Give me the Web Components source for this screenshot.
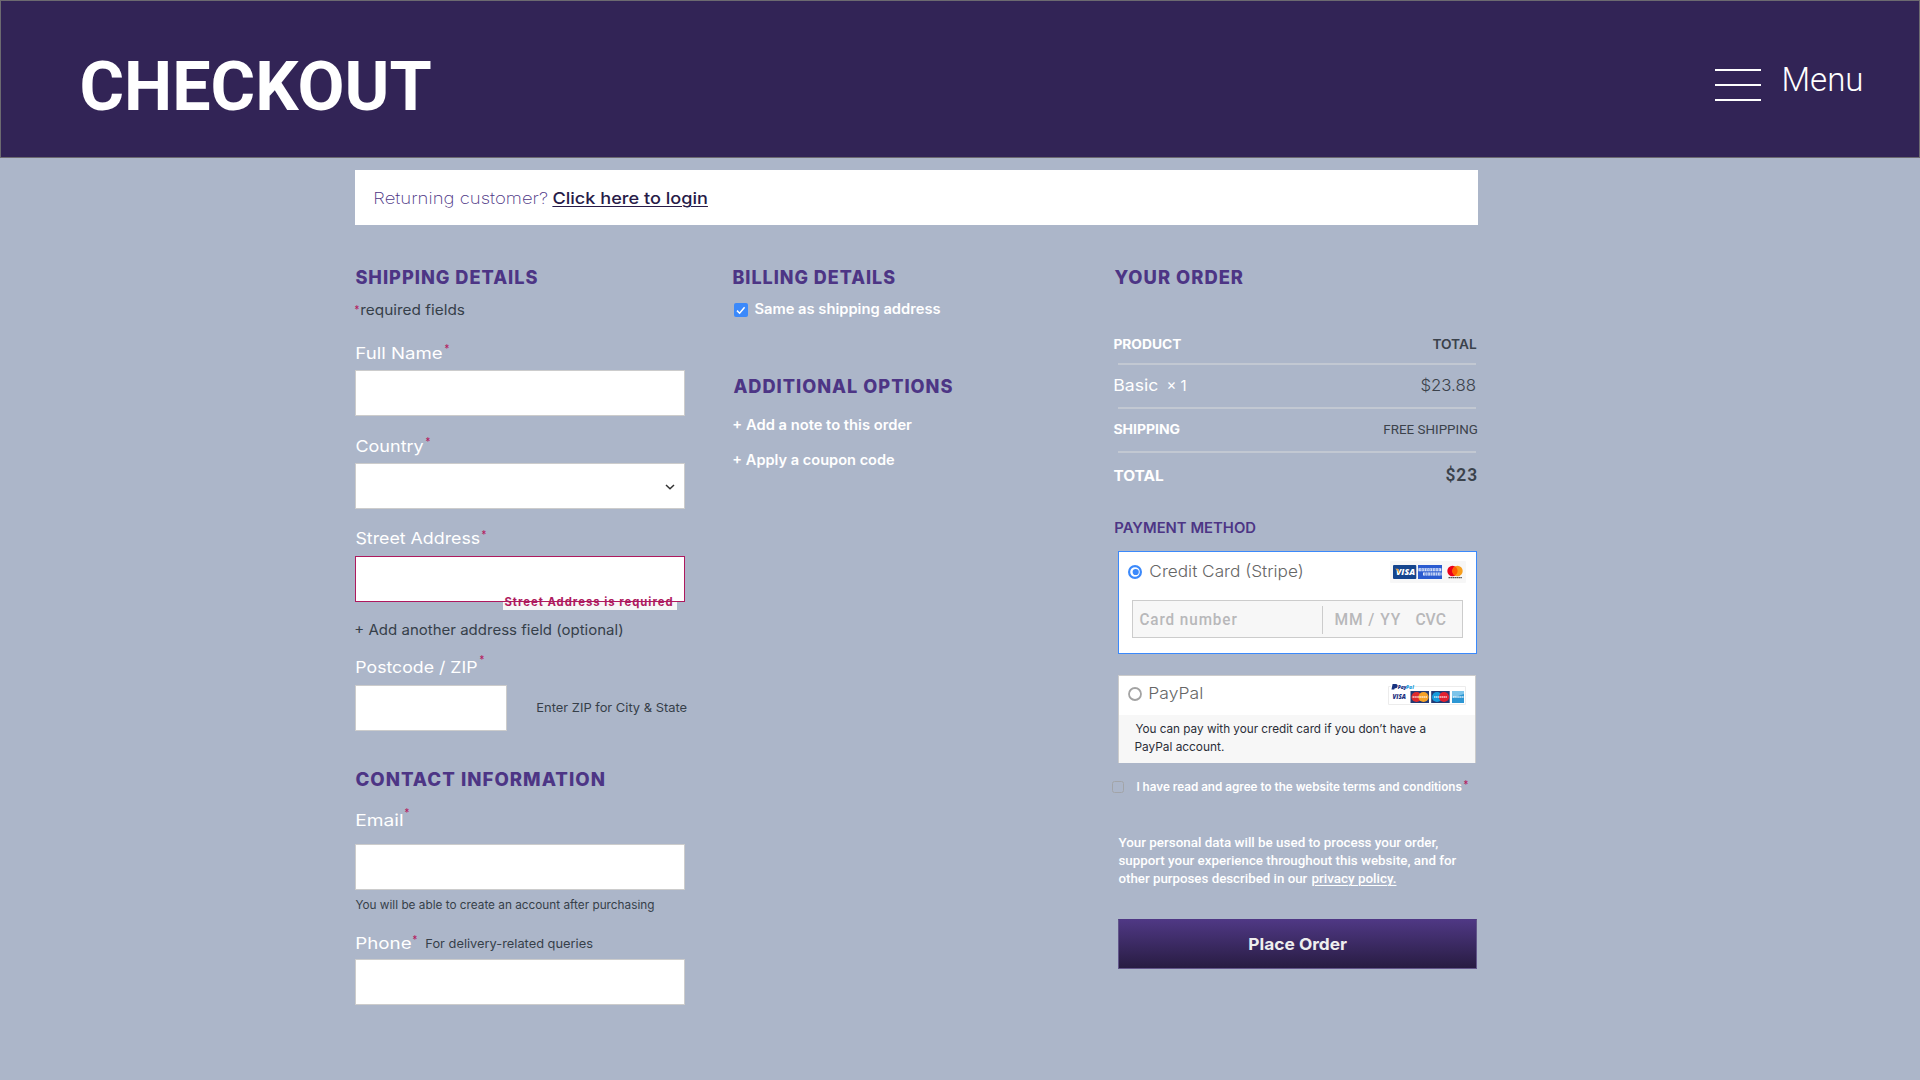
<!DOCTYPE html>
<html lang="en">
<head>
<meta charset="utf-8">
<title>Checkout</title>
<style>
body{margin:0;background:#acb6c9;font-family:Inter,"Liberation Sans",sans-serif;color:#fff;width:1920px;height:1080px;overflow:hidden}
</style>
</head>
<body>
<checkout-page></checkout-page>
<script>
const ctx = document.createElement('canvas').getContext('2d');

/* One line of text whose ink fills the width `w`; the baseline sits on the bottom edge of the box. */
class FitText extends HTMLElement {
  connectedCallback() {
    const n = (k, d) => this.hasAttribute(k) ? parseFloat(this.getAttribute(k)) : d;
    const roboto = this.hasAttribute('roboto');
    const size = n('s', 16), weight = n('wt', 400), h = n('h', 20), ls = n('ls', 0), w = n('w', 100);
    const family = roboto ? 'Roboto' : 'Inter';
    const text = this.textContent || this.getRootNode().host.textContent;
    ctx.font = `${weight} ${size}px ${family}`;
    ctx.letterSpacing = ls + 'px';
    const m = ctx.measureText(text);
    const left = -m.actualBoundingBoxLeft, ink = m.actualBoundingBoxRight + m.actualBoundingBoxLeft;
    const k = w / ink, base = roboto ? .3415 : .3638;
    const root = this.attachShadow({mode: 'open'});
    root.innerHTML = `<style>
      :host{display:block;flex:none;width:${w}px;height:${h}px;margin-left:${n('ml', 0)}px;${this.hasAttribute('c') ? `color:${this.getAttribute('c')};` : ''}}
      span{display:block;width:max-content;white-space:pre;font:${weight} ${size}px/${2 * (h - base * size)}px ${family},"Liberation Sans",sans-serif;letter-spacing:${ls}px;
      transform-origin:0 0;transform:translate(${-left * k - .6}px,${n('dy', 0)}px) scaleX(${k});${this.hasAttribute('u') ? 'text-decoration:underline;text-decoration-thickness:1px;text-underline-offset:2px;' : ''}}
    </style><span><slot></slot></span>`;
  }
}
customElements.define('fit-text', FitText);

const define = (name, html) => {
  const t = document.createElement('template');
  t.innerHTML = html;
  customElements.define(name, class extends HTMLElement {
    connectedCallback() {
      if (!this.shadowRoot) this.attachShadow({mode: 'open'}).append(t.content.cloneNode(true));
    }
  });
};

define('req-star', `<style>:host{display:block;flex:none;width:5px;color:#b5175e}</style><fit-text s="11.5" wt="400" w="5" ml=".5"><slot></slot></fit-text>`);

define('h-title', `<style>:host{display:block;color:#4d3585}</style><slot></slot>`);

define('text-box', `<style>:host{display:block;flex:none;box-sizing:border-box;width:330px;height:46px;background:#fff;border:1px solid #ccc}
:host([error]){border-color:#ae195e}:host([small]){width:152px}
.in{display:flex;justify-content:flex-end;align-items:center;height:100%}</style><div class="in"><slot></slot></div>`);

define('field-error', `<style>:host{position:absolute;left:148px;top:41px;width:174px;height:13px;background:linear-gradient(#fff 4px,#f7f7f7 4px);color:#ae195e}
.rule{position:absolute;left:0;right:0;top:4px;height:1px;background:#ae195e}.t{margin-top:-11px}</style>
<div class="t"><fit-text s="11.4" wt="700" ls="1" w="168" ml="1.5" dy="1"><slot></slot></fit-text></div><div class="rule"></div>`);

define('radio-dot', `<style>:host{display:block;flex:none;width:14px;height:14px}svg{display:block}.on{display:none}:host([on]) .on{display:block}:host([on]) .off{display:none}</style>
<svg class="on" width="14" height="14"><circle cx="7" cy="7" r="5.9" fill="#fff" stroke="#3b89fb" stroke-width="2.2"/><circle cx="7.7" cy="7" r="3.1" fill="#3b89fb"/></svg>
<svg class="off" width="14" height="14"><circle cx="7" cy="7" r="6" fill="#fff" stroke="#a3a3a3" stroke-width="1.8"/></svg>`);

define('check-mark', `<style>:host{display:block;flex:none}svg{display:block}.off{display:none}:host([off]) .off{display:block}:host([off]) .on{display:none}</style>
<svg class="on" width="14" height="14"><rect width="14" height="14" rx="2" fill="#3b89fb"/><path d="M3 7.6 5.6 10.2 10.6 4.2" fill="none" stroke="#fff" stroke-width="1.5"/></svg>
<svg class="off" width="12" height="12"><rect x=".5" y=".5" width="11" height="11" rx="2" fill="none" stroke="#a2a4a8"/></svg>`);

define('card-logos', `<style>:host{display:block;flex:none;width:76px;height:22px;background:#f7f7f7;border-radius:1px}svg{display:block}text{font-family:"Open Sans",sans-serif}</style>
<svg width="76" height="22" viewBox="0 0 76 22">
<rect x="3" y="4" width="23.3" height="14" rx="1" fill="#15458e"/>
<text x="6" y="14.2" font-size="8.6" font-weight="800" font-style="italic" fill="#fff" textLength="19" lengthAdjust="spacingAndGlyphs">VISA</text><path d="M5 7.7h3l1.2 3.6-.8 1.2C7.8 10 6.8 8.6 5 7.7z" fill="#e9a13b"/>
<rect x="28" y="4" width="24" height="14" fill="#2a5bd0"/>
<g fill="none" stroke="#dfe8fb" stroke-width="3"><path d="M28.500 8.700h23" stroke-dasharray="2.500 .4"/><path d="M33 12.900h18.500" stroke-dasharray="2.100 .4"/></g>
<g fill="none" stroke="#2a5bd0" stroke-width=".7"><path d="M29.500 8.900h21M34 13h17" stroke-dasharray="1.300 .8"/></g>
<circle cx="62.500" cy="10" r="5.200" fill="#eb001b"/><circle cx="67.500" cy="10" r="5.200" fill="#f79e1b"/><path d="M65 5.500a5.200 5.200 0 0 1 0 9 5.200 5.200 0 0 1 0-9z" fill="#ff5f00"/>
<path d="M58.500 16.700h13.500" stroke="#555" stroke-width="1.300" stroke-dasharray="1.700 .4"/>
</svg>`);

define('paypal-logos', `<style>:host{display:block;flex:none;width:78px;height:22px}svg{display:block}text{font-family:"Open Sans",sans-serif}</style>
<svg width="78" height="22" viewBox="0 0 78 22">
<path d="M3 2.500H.5v18h77v-18H25" fill="none" stroke="#ececec"/>
<path d="M4.600 0h3c2 0 2.500 1.500 1.900 2.700-.4 1-1.300 1.500-2.700 1.500L6.200 5.500H3.500z" fill="#17317f"/>
<text x="9.700" y="4.800" font-size="5" font-weight="800" font-style="italic" fill="#17317f">Pay</text><text x="18" y="4.800" font-size="5" font-weight="800" font-style="italic" fill="#2aa0dd">Pal</text>
<text x="4.500" y="15.200" font-size="7" font-weight="800" font-style="italic" fill="#1c2f80" textLength="13.500" lengthAdjust="spacingAndGlyphs">VISA</text>
<rect x="22.500" y="7" width="18.500" height="12" fill="#223a75"/><circle cx="28.500" cy="13" r="5.100" fill="#e02a2d"/><circle cx="35.500" cy="13" r="5.100" fill="#f6a227"/><path d="M24.500 13h14.500" stroke="#fff" stroke-opacity=".75" stroke-width="1.500" stroke-dasharray="1.500 .4"/>
<rect x="43.200" y="7" width="18.500" height="12" fill="#223a75"/><circle cx="49" cy="13" r="5.100" fill="#159bdc"/><circle cx="56" cy="13" r="5.100" fill="#e21f2f"/><path d="M46 13h13" stroke="#fff" stroke-opacity=".75" stroke-width="1.500" stroke-dasharray="1.500 .4"/>
<rect x="64" y="7" width="12" height="12" fill="#2d97d4"/><path d="M64 7h12v3l-12 4z" fill="#7cc4ea"/><path d="M65 13h11" stroke="#fff" stroke-opacity=".8" stroke-width="1.600" stroke-dasharray="1.700 .4"/>
</svg>`);

define('site-header', `<style>
:host{display:flex;box-sizing:border-box;height:158px;background:#322456;border:1px solid #6c6a70;align-items:flex-start;justify-content:space-between;padding:48px 57px 0 81px}
.menu{display:flex;align-items:flex-start}.bars{display:grid;gap:13px;width:46px;margin:20px 22.500px 0 0}.bars i{display:block;height:2px;background:#fff}
</style>
<fit-text roboto s="69" wt="700" w="349.500" h="61" dy="1"><slot></slot></fit-text>
<div class="menu"><div class="bars"><i></i><i></i><i></i></div><fit-text roboto s="34" wt="300" w="77.500" ml="1" h="42">Menu</fit-text></div>`);

define('login-bar', `<style>:host{display:flex;box-sizing:border-box;width:1123px;height:55px;background:#fff;padding:14px 0 0 19.500px;margin:12px 0 0 355px}</style>
<fit-text s="16.500" wt="200" w="173.500" c="#4d3585">Returning customer?</fit-text><fit-text s="16.500" wt="500" w="154.500" ml="4.500" c="#281b48" u>Click here to login</fit-text>`);

define('shipping-column', `<style>:host{display:block;color:#fff}.r{display:flex}.rel{position:relative}svg{display:block;margin:2px 9px 0 0}</style>
<h-title><fit-text s="18.300" wt="800" ls="1" w="182" ml=".5">SHIPPING DETAILS</fit-text></h-title>
<div class="r" style="margin-top:11px"><req-star style="margin-left:-1px">*</req-star><fit-text s="14.200" wt="400" w="103" ml="2.500" c="#363f49">required fields</fit-text></div>
<div class="r" style="margin-top:24px"><fit-text s="16.500" w="85.500" ml="1.500">Full Name</fit-text><req-star style="margin:-5px 0 0 2px">*</req-star></div>
<text-box style="margin-top:11px"></text-box>
<div class="r" style="margin-top:16px"><fit-text s="16.500" w="68" ml=".5">Country</fit-text><req-star style="margin:-5px 0 0 2px">*</req-star></div>
<text-box style="margin-top:11px"><svg width="10" height="6"><path d="M1 1 5 4.800 9 1" fill="none" stroke="#333" stroke-width="1.500"/></svg></text-box>
<div class="r" style="margin-top:15px"><fit-text s="16.500" w="124" ml=".5">Street Address</fit-text><req-star style="margin:-4px 0 0 1.500px">*</req-star></div>
<div class="rel" style="margin-top:12px"><text-box error></text-box><field-error>Street Address is required</field-error></div>
<fit-text s="14.200" wt="400" w="267" ml="1" c="#363f49" style="margin-top:13px">+ Add another address field (optional)</fit-text>
<div class="r" style="margin-top:18px"><fit-text s="16.500" w="120.500" ml="1.500">Postcode / ZIP</fit-text><req-star style="margin:-8px 0 0 2px">*</req-star></div>
<div class="r" style="margin-top:12px"><text-box small></text-box><fit-text s="12.300" wt="400" w="149.500" ml="30.500" h="27" c="#363f49">Enter ZIP for City &amp; State</fit-text></div>
<h-title style="margin-top:35px"><fit-text s="18.300" wt="800" ls="1" w="248.500" ml=".5">CONTACT INFORMATION</fit-text></h-title>
<div class="r" style="margin-top:20px"><fit-text s="16.500" w="46" ml="1.500">Email</fit-text><req-star style="margin:-8px 0 0 2px">*</req-star></div>
<text-box style="margin-top:18px"></text-box>
<fit-text s="11.500" wt="400" w="299" ml=".6" h="15" dy="1" c="#363f49" style="margin-top:4px">You will be able to create an account after purchasing</fit-text>
<div class="r" style="margin-top:20px"><fit-text s="16.500" w="54.500" ml="1.500">Phone</fit-text><req-star style="margin:-4px 0 0 1px">*</req-star><fit-text s="12.300" wt="400" w="166" ml="9.500" dy="-1" c="#363f49">For delivery-related queries</fit-text></div>
<text-box style="margin-top:10px"></text-box>`);

define('billing-column', `<style>:host{display:block;color:#fff}.r{display:flex}</style>
<h-title><fit-text s="18.300" wt="800" ls="1" w="161.500" ml=".6">BILLING DETAILS</fit-text></h-title>
<div class="r" style="margin-top:10px"><check-mark style="margin:9px 0 -3px 1px"></check-mark><fit-text s="14" wt="600" w="186.500" ml="7.200">Same as shipping address</fit-text></div>
<h-title style="margin-top:59px"><fit-text s="18.300" wt="800" ls="1" w="219" ml=".5">ADDITIONAL OPTIONS</fit-text></h-title>
<fit-text s="14" wt="600" w="179" ml=".6" style="margin-top:17px">+ Add a note to this order</fit-text>
<fit-text s="14" wt="600" w="161" ml=".6" style="margin-top:15px">+ Apply a coupon code</fit-text>`);

define('order-line', `<style>:host{display:block;height:2px;width:358px;margin-left:5px;background:#c2c8d2}</style>`);

define('stripe-card', `<style>:host{display:block;box-sizing:border-box;width:359px;height:103px;margin-left:5px;background:#fff;border:1px solid #3b89fb;padding:9px 10px 0 9px}
.r{display:flex;height:22px}.cards{margin:0 0 0 auto}.num{display:flex;box-sizing:border-box;width:331px;height:38px;margin:17px 0 0 4px;border:1px solid #ccc;background:#f7f7f7;color:#b8b8ba;padding-top:4px}.d{width:1px;height:28px;margin:1px 0 0 84.500px;background:#ccc}</style>
<div class="r"><radio-dot on style="margin-top:4px"></radio-dot><fit-text s="16.500" wt="300" w="151.500" ml="9" h="16" c="#666">Credit Card (Stripe)</fit-text><card-logos class="cards"></card-logos></div>
<div class="num"><fit-text roboto s="16.800" wt="500" ls="1" w="97.500" ml="7">Card number</fit-text><div class="d"></div><fit-text roboto s="16.800" wt="500" ls="1" w="65.500" ml="13">MM / YY</fit-text><fit-text roboto s="16.800" wt="500" w="30.500" ml="14">CVC</fit-text></div>`);

define('paypal-card', `<style>:host{display:block;box-sizing:border-box;width:358px;height:88px;margin-left:5px;background:linear-gradient(#fff 39px,#f7f7f7 39px);border:1px solid #ccc;border-bottom:0;padding:8px 9px 0 9px}
.r{display:flex;height:31px}.logos{margin-left:auto}</style>
<div class="r"><radio-dot style="margin-top:3px"></radio-dot><fit-text s="16.500" wt="300" w="53" ml="8" h="15" c="#666">PayPal</fit-text><paypal-logos class="logos"></paypal-logos></div>
<fit-text s="11.800" wt="400" w="290" ml="7.500" h="18" dy="1" c="#2b2e38">You can pay with your credit card if you don’t have a</fit-text>
<fit-text s="11.800" wt="400" w="88.500" ml="7.700" h="18" dy="1" c="#2b2e38">PayPal account.</fit-text>`);

define('order-button', `<style>:host{display:flex;justify-content:center;box-sizing:border-box;width:359px;height:50px;margin-left:5px;background:linear-gradient(#4f3884,#281c42);border:1px solid #62568a;border-top-color:#4f3884;padding-top:10px;color:#eee}</style>
<fit-text s="16.500" wt="700" w="98" ml="2"><slot></slot></fit-text>`);

define('order-column', `<style>:host{display:block;color:#fff}.r{display:flex}</style>
<h-title><fit-text s="18.300" wt="800" ls="1" w="128.500" ml="1.500">YOUR ORDER</fit-text></h-title>
<div class="r" style="margin-top:45px"><fit-text s="12.800" wt="700" w="68.500" ml=".5" dy="1">PRODUCT</fit-text><fit-text s="12.800" wt="600" w="44" ml="251" dy="1" c="#3b424b">TOTAL</fit-text></div>
<order-line style="margin-top:14px"></order-line>
<div class="r" style="margin-top:6px"><fit-text s="16.500" w="43.500" ml="1.500">Basic</fit-text><fit-text s="15" w="18" ml="10.300">× 1</fit-text><fit-text s="16.500" wt="300" w="54.500" ml="235.500" c="#3b424b">$23.88</fit-text></div>
<order-line style="margin-top:16px"></order-line>
<div class="r" style="margin-top:5px"><fit-text s="12.800" wt="700" w="66" dy="1" ml=".8">SHIPPING</fit-text><fit-text roboto s="13" w="92.500" ml="205.500" c="#3b424b">FREE SHIPPING</fit-text></div>
<order-line style="margin-top:17px"></order-line>
<div class="r" style="margin-top:8px"><fit-text s="14" wt="700" w="50.500" ml=".5">TOTAL</fit-text><fit-text roboto s="18" wt="600" ls="1" w="31.500" ml="282" c="#3b424b">$23</fit-text></div>
<h-title style="margin-top:32px"><fit-text s="14" wt="600" w="140.500" ml="2.500">PAYMENT METHOD</fit-text></h-title>
<stripe-card style="margin-top:18px"></stripe-card>
<paypal-card style="margin-top:21px"></paypal-card>
<div class="r" style="margin-top:8px"><check-mark off style="margin:10px 0 -2px -1px"></check-mark><fit-text s="11.800" wt="600" w="325" ml="12.500" dy="1">I have read and agree to the website terms and conditions</fit-text><req-star style="margin:-1px 0 0 2px">*</req-star></div>
<fit-text roboto s="12.600" wt="500" w="320" ml="5.500" style="margin-top:36px">Your personal data will be used to process your order,</fit-text>
<fit-text roboto s="12.600" wt="500" w="338.500" ml="5.500" h="18">support your experience throughout this website, and for</fit-text>
<div class="r"><fit-text roboto s="12.600" wt="500" w="189.500" ml="5.500" h="18">other purposes described in our</fit-text><fit-text roboto s="12.600" wt="500" w="84.500" ml="4" h="18" u>privacy policy.</fit-text></div>
<order-button style="margin-top:36px">Place Order</order-button>`);

define('checkout-page', `<style>:host{display:block}main{display:grid;grid-template-columns:378px 380px 365px;margin:39px 0 0 355px}</style>
<site-header>CHECKOUT</site-header><login-bar></login-bar>
<main><shipping-column></shipping-column><billing-column></billing-column><order-column></order-column></main>`);
</script>
</body>
</html>
